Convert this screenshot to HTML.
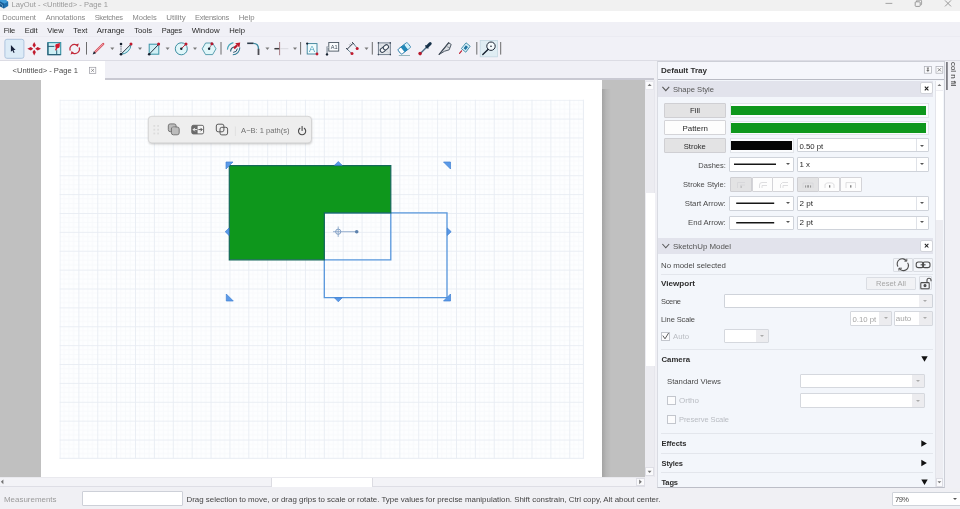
<!DOCTYPE html>
<html lang="en">
<head>
<meta charset="utf-8">
<title>LayOut - &lt;Untitled&gt; - Page 1</title>
<style>
*{box-sizing:border-box;margin:0;padding:0}
html,body{width:960px;height:509px;overflow:hidden;background:#f0f0f5}
body{font-family:"Liberation Sans",sans-serif;font-size:8px;color:#333;position:relative}
.a{position:absolute}
.t{position:absolute;white-space:nowrap;line-height:10px;height:10px;font-size:8px}
.b{font-weight:bold}
svg{position:absolute;overflow:visible}
/* bands */
#titlebar{left:0;top:0;width:960px;height:10.6px;background:#f1f1f1}
#menu1{left:0;top:10.6px;width:960px;height:11.6px;background:#fff}
#menu2{left:0;top:22.2px;width:960px;height:13.8px;background:#f0f0f6}
#toolbar{left:0;top:36px;width:960px;height:25px;background:#f1f1f7;border-top:1px solid #ebebf2;border-bottom:1px solid #dcdce4}
#tabbar{left:0;top:61px;width:654px;height:19px;background:#f0f0f6;border-bottom:2px solid #c9c9d2}
#tab{left:0;top:61px;width:105px;height:19px;background:#fff}
/* canvas */
#canvas{left:0;top:80px;width:645px;height:397px;background:#c0c0c0;overflow:hidden}
#page{left:41px;top:0;width:561px;height:397px;background:#fff}
#vscroll{left:645px;top:80px;width:10px;height:397px;background:#ececf1;border-right:1px solid #e6e6ec}
#hscroll{left:0;top:477px;width:645px;height:10px;background:#f3f3f7;border-top:1px solid #e9e9ee;border-bottom:1px solid #dedee5}
/* tray */
#tray{left:657px;top:61px;width:288px;height:427px;background:#f3f6fb;border:1px solid #cdcfd7;border-left-color:#d9dbe2;border-bottom-color:#bcbec7}
#trayhead{left:658px;top:62px;width:286px;height:18px;background:#f5f6fb;border-bottom:1px solid #b9bbc4}
.sechead{left:658px;width:275px;height:16px;background:#e2e3ec}
#status{left:0;top:488px;width:960px;height:21px;background:#f0f0f4}

.btn{position:absolute;border:1px solid #cfcfd3;background:#e3e3e4;border-radius:1px}
.btn.w{background:#fdfdfd;border-color:#d4d4d8}
.sw{position:absolute;background:#fbfcfe;border:1px solid #e2e5ea}
.sw i{position:absolute;display:block}
.cb{position:absolute;background:#fff;border:1px solid #cfd3da;border-radius:1px}
.cb u{position:absolute;top:0;bottom:0;width:1px;background:#dfe2e8}
.cb.dis{border-color:#d5d8de}
.cb.dis b{position:absolute;top:0;bottom:0;right:0;background:#ececef}
.ar{position:absolute;width:0;height:0;border-left:2.4px solid transparent;border-right:2.4px solid transparent;border-top:2.8px solid #555}
.ar.l{border-top-color:#aaa}
.ln{position:absolute;height:1.6px;background:#1a1a1a}
.sep{position:absolute;left:661px;width:272px;height:1px;background:#e3e6ec}
.chk{position:absolute;width:9px;height:9px;background:#fcfcfd;border:1px solid #c3c6cd}
.xbtn{position:absolute;width:13px;height:12px;background:#fff;border:1px solid #d2d4da;border-radius:2px}
.ibtn{position:absolute;background:#f4f6fa;border:1px solid #dadde3;border-radius:1px}
</style>
</head>
<body>
<div class="a" id="titlebar"></div>
<div class="a" id="menu1"></div>
<div class="a" id="menu2"></div>
<div class="a" id="toolbar"></div>
<div class="a" id="tabbar"></div>
<div class="a" id="tab"></div>


<!--ICONS-START-->
<svg id="tb" style="left:0;top:0;will-change:transform" width="960" height="509" viewBox="0 0 960 509" fill="none">
  <rect x="4.9" y="39.3" width="19" height="19" rx="2" fill="#dcebf7" stroke="#a7c0da" stroke-width="0.9"/>
  <path d="M10.9 45L10.9 51.8L12.5 50.4L13.6 52.9L14.6 52.4L13.5 50L15.6 50Z" fill="#18223c"/>
  <!-- move -->
  <g fill="#c01a2c">
    <path d="M34.2 41.9L35.9 45.3L34.2 47.7L32.5 45.3Z"/>
    <path d="M34.2 55.5L35.9 52.1L34.2 49.7L32.5 52.1Z"/>
    <path d="M27.4 48.7L30.8 47L33.2 48.7L30.8 50.4Z"/>
    <path d="M41 48.7L37.6 47L35.2 48.7L37.6 50.4Z"/>
  </g>
  <!-- scale -->
  <rect x="47.9" y="42.6" width="12.8" height="12" fill="#cdeff5" stroke="#3590a3" stroke-width="1.1"/>
  <path d="M47.9 42.6V54.6H60.7" stroke="#2a6078" stroke-width="1.2"/>
  <path d="M47.9 46.4H54.4M56.7 50.2V54.6" stroke="#2a6078" stroke-width="1"/>
  <path d="M56.8 44.2L60 42.7L59.4 46Z" fill="#d4182c"/>
  <path d="M55.9 49.8L57.2 46.8" stroke="#d4182c" stroke-width="1.5" stroke-linecap="round"/>
  <circle cx="57.5" cy="46" r="2.3" fill="#d4182c"/>
  <!-- rotate -->
  <g stroke="#c22a3a" stroke-width="1.15">
    <path d="M70.2 50.6A4.6 4.6 0 0 1 76.4 44.8"/><path d="M79.2 47.4A4.6 4.6 0 0 1 73 53.2"/>
  </g>
  <path d="M78.8 43.6L77.8 47L75 44.8Z M70.6 54.4L71.6 51L74.4 53.2Z" fill="#c22a3a"/>
  <!-- pencil -->
  <path d="M95.4 51.8L103.2 44" stroke="#d64a57" stroke-width="2.3" stroke-linecap="round"/>
  <path d="M95.4 51.8L103.2 44" stroke="#f6c9cd" stroke-width="0.8"/>
  <path d="M92.7 54.5L93.9 51.2L96 53.3Z" fill="#15202e"/>
  <!-- arc -->
  <path d="M121 54.2L131 44.4A10 10 0 0 1 121 54.2Z" fill="#d3f2f6"/>
  <path d="M121 54.2A10 10 0 0 0 131 44.6" stroke="#3a93a6" stroke-width="1"/>
  <path d="M121 54.2L130.6 44.6" stroke="#15202e" stroke-width="0.9"/>
  <path d="M121 44V54" stroke="#15202e" stroke-width="0.8" stroke-dasharray="1.2 1"/>
  <circle cx="121" cy="44" r="1.3" fill="#15202e"/><circle cx="121" cy="54.3" r="1.3" fill="#15202e"/><circle cx="131" cy="44" r="1.5" fill="#c01a2e"/>
  <!-- rectangle -->
  <rect x="149.2" y="44.2" width="9.6" height="10" fill="#cfeff5" stroke="#3a93a6" stroke-width="1"/>
  <path d="M149.2 54.2L158.6 44.4" stroke="#15202e" stroke-width="0.9"/>
  <circle cx="149.2" cy="54.3" r="1.3" fill="#15202e"/><circle cx="158.6" cy="44" r="1.5" fill="#c01a2e"/>
  <!-- circle -->
  <circle cx="181.3" cy="48.8" r="6" fill="#e0f6f9" stroke="#2d8498" stroke-width="0.9"/>
  <path d="M181.3 48.8L185.8 44.2" stroke="#c01a2e" stroke-width="0.9"/>
  <circle cx="181.3" cy="48.8" r="1.2" fill="#15202e"/><circle cx="186" cy="44" r="1.5" fill="#c01a2e"/>
  <!-- polygon -->
  <path d="M202.2 48.8L205.6 43H212.6L216 48.8L212.6 54.6H205.6Z" fill="#e0f6f9" stroke="#36889c" stroke-width="0.8"/>
  <path d="M209.1 48.8L211.9 43.9" stroke="#6a3a48" stroke-width="0.6"/>
  <circle cx="209.1" cy="48.8" r="1.2" fill="#15202e"/><circle cx="211.9" cy="43.8" r="1.5" fill="#b8152e"/>
  <!-- offset -->
  <path d="M227.4 49.6A8 8 0 0 1 233.4 42.6" stroke="#46a6b9" stroke-width="1.1"/>
  <path d="M230.6 51.6A5 5 0 0 1 234.6 46.8" stroke="#2a5a70" stroke-width="1.1"/>
  <path d="M232.8 54.8A7 7 0 0 0 239.8 47.6" stroke="#2f7c95" stroke-width="1.1"/>
  <path d="M233.2 52.4A4.4 4.4 0 0 0 237.4 48.6" stroke="#2a5a70" stroke-width="1"/>
  <path d="M234 48.4L237.2 45.2" stroke="#bd1a2e" stroke-width="2.2"/>
  <path d="M240.2 42.4L239.4 47.4L235.2 43.2Z" fill="#bd1a2e"/>
  <!-- fillet -->
  <path d="M253.2 43.3Q258.5 43.3 258.5 49" stroke="#3a8aa0" stroke-width="1.3"/>
  <path d="M258.5 48.8V55" stroke="#4c4c52" stroke-width="1.8"/>
  <path d="M247.2 43.3H253.4" stroke="#2c3a48" stroke-width="1.6"/>
  <!-- split -->
  <path d="M274.4 48.7H279.4" stroke="#3a3a3a" stroke-width="1.5"/>
  <path d="M279.6 42V55.2" stroke="#8a4f58" stroke-width="0.7"/>
  <path d="M280 48.7H288.4" stroke="#d7d7dd" stroke-width="0.9"/>
  <!-- text -->
  <rect x="307.2" y="43.6" width="9.8" height="10.4" fill="#f0fbfd" stroke="#3a8299" stroke-width="0.9"/>
  <circle cx="307.2" cy="43.6" r="1.1" fill="#15202e"/><circle cx="317" cy="54" r="1.4" fill="#c01a2e"/>
  <!-- label -->
  <rect x="328.8" y="42.5" width="9.9" height="8.6" fill="#fafcfd" stroke="#4a5662" stroke-width="0.9"/>
  <path d="M328.8 47.4H327.2V54" stroke="#7d8893" stroke-width="1.6"/><path d="M328.8 47.4H327.2V54" stroke="#f3f5f7" stroke-width="0.5"/>
  <circle cx="327" cy="54.4" r="1.2" fill="#15202e"/>
  <!-- dimension -->
  <path d="M347.2 49.2L353.2 43.2" stroke="#15202e" stroke-width="0.9"/>
  <path d="M346 48L348.4 50.4M352 42L354.4 44.4" stroke="#15202e" stroke-width="0.8"/>
  <path d="M347.6 49.6L351.6 53.4M353.4 43.6L357 47.8" stroke="#4a6a7a" stroke-width="0.8"/>
  <path d="M349.4 44.6L350.2 45.6M350.6 43.6L351.4 44.6" stroke="#15202e" stroke-width="0.5"/>
  <circle cx="352" cy="53.6" r="1.5" fill="#c01a2e"/><circle cx="357.2" cy="48.6" r="1.5" fill="#c01a2e"/>
  <!-- frame -->
  <rect x="378.4" y="42.9" width="11.9" height="11.7" fill="#e4e7eb" stroke="#6a7786" stroke-width="0.9"/>
  <path d="M378.4 42.9L390.3 54.6" stroke="#c3cad2" stroke-width="0.6"/>
  <g fill="#3a4656"><circle cx="378.4" cy="42.9" r="0.8"/><circle cx="390.3" cy="42.9" r="0.8"/><circle cx="378.4" cy="54.6" r="0.8"/><circle cx="390.3" cy="54.6" r="0.8"/></g>
  <g transform="rotate(-40 384.4 48.6)" fill="#f7f8fa" stroke="#3a4758" stroke-width="1">
    <rect x="379.6" y="46.5" width="5.6" height="4.2" rx="2.1"/>
    <rect x="383.6" y="46.5" width="5.6" height="4.2" rx="2.1"/>
  </g>
  <!-- eraser -->
  <g transform="rotate(-38 404.2 48.4)">
    <rect x="398.2" y="45.3" width="12" height="6.2" rx="1.4" fill="#fff" stroke="#1f78a8" stroke-width="0.9"/>
    <rect x="402.2" y="45.3" width="4.4" height="6.2" fill="#2287b8"/>
    <rect x="406.6" y="45.75" width="3.15" height="5.3" rx="0.9" fill="#d3f1fa"/>
  </g>
  <path d="M398.8 55.5H410" stroke="#7fa7ad" stroke-width="0.8"/>
  <!-- eyedropper -->
  <path d="M420.8 53L427.6 46.2" stroke="#4f6f88" stroke-width="1.4"/>
  <path d="M427 46.8L430.2 43.6" stroke="#17324a" stroke-width="3" stroke-linecap="round"/>
  <path d="M425.4 45.4L428.4 48.4" stroke="#17324a" stroke-width="1.1"/>
  <circle cx="420.1" cy="53.6" r="1.8" fill="#b8182c"/>
  <!-- knife -->
  <path d="M439.2 54.4L448.6 42.8L451.2 44.4L449.2 49.8L444.6 51.2Z" fill="#dde0e5" stroke="#4d5864" stroke-width="1" stroke-linejoin="round"/>
  <path d="M439.2 54.4L448.6 42.8" stroke="#46505c" stroke-width="1.3" stroke-linecap="round"/>
  <path d="M447.2 46.8L449.8 47.8" stroke="#5a6470" stroke-width="0.7"/>
  <!-- paint tag -->
  <path d="M461.4 48.6L466 42.8L470.2 46.2L465.8 52.2Z" fill="#d9f0f8" stroke="#3a88a6" stroke-width="0.9" stroke-linejoin="round"/>
  <path d="M463.6 48.2L465.9 45.3L468 47L465.7 50Z" fill="#1f73a0"/>
  <path d="M461.6 50.8L459.5 53.4" stroke="#c01c30" stroke-width="1.1" stroke-linecap="round"/>
  <!-- zoom -->
  <rect x="480.2" y="40.4" width="17.2" height="16.4" fill="#dfedf3" stroke="#c2d7e1" stroke-width="0.8"/>
  <circle cx="491" cy="46.2" r="4.2" fill="#f4fafc" stroke="#1b2634" stroke-width="1"/>
  <circle cx="491" cy="46.2" r="0.8" fill="#15202e"/>
  <path d="M488 49.4L482.8 54.4" stroke="#15202e" stroke-width="1.4" stroke-linecap="round"/>
  <path d="M110.3 47.6H114.3L112.3 49.9Z" fill="#7a7a7a"/><path d="M138.0 47.6H142.0L140.0 49.9Z" fill="#7a7a7a"/><path d="M165.6 47.6H169.6L167.6 49.9Z" fill="#7a7a7a"/><path d="M193.0 47.6H197.0L195.0 49.9Z" fill="#7a7a7a"/><path d="M265.4 47.6H269.4L267.4 49.9Z" fill="#7a7a7a"/><path d="M293.0 47.6H297.0L295.0 49.9Z" fill="#7a7a7a"/><path d="M364.5 47.6H368.5L366.5 49.9Z" fill="#7a7a7a"/><path d="M86.5 42V54.6" stroke="#5c5c5c" stroke-width="0.9"/><path d="M221.0 42V54.6" stroke="#5c5c5c" stroke-width="0.9"/><path d="M300.6 42V54.6" stroke="#5c5c5c" stroke-width="0.9"/><path d="M372.3 42V54.6" stroke="#5c5c5c" stroke-width="0.9"/><path d="M476.8 42V54.6" stroke="#5c5c5c" stroke-width="0.9"/><path d="M500.7 42V54.6" stroke="#5c5c5c" stroke-width="0.9"/>
  <text x="309.1" y="52.4" font-family="Liberation Sans, sans-serif" font-size="9" fill="#4a9fba">A</text>
  <text x="330.7" y="49.4" font-family="Liberation Sans, sans-serif" font-size="5.6" fill="#3d4a58">A1</text>
</svg>
<!--ICONS-END-->
<div class="a" id="canvas">
  <div class="a" id="page"></div>
</div>

<svg id="cv" class="a" style="left:0;top:0" width="960" height="509" viewBox="0 0 960 509">
  <defs>
    <pattern id="grid" x="59.5" y="99.7" width="18.88" height="18.88" patternUnits="userSpaceOnUse">
      <rect width="18.88" height="18.88" fill="#fdfeff"/>
      <path d="M4.72 0V18.88M9.44 0V18.88M14.16 0V18.88M0 4.72H18.88M0 9.44H18.88M0 14.16H18.88" stroke="#f6f8fb" stroke-width="0.7" fill="none"/>
      <path d="M0.5 0V18.88M0 0.5H18.88" stroke="#e8ecf3" stroke-width="0.9" fill="none"/>
    </pattern>
    <linearGradient id="pshadow" x1="0" x2="1" y1="0" y2="0">
      <stop offset="0" stop-color="#a3a3a3"/><stop offset="0.45" stop-color="#b6b6b6"/><stop offset="1" stop-color="#c0c0c0"/>
    </linearGradient>
    <filter id="ftb" x="-10%" y="-30%" width="120%" height="170%"><feGaussianBlur stdDeviation="1.2"/></filter>
  </defs>
  <!-- page shadow -->
  <rect x="602" y="89" width="9" height="388" fill="url(#pshadow)"/>
  <!-- grid -->
  <rect x="59.5" y="99.7" width="524" height="358.9" fill="url(#grid)"/>
  <path d="M583.5 99.7V458.6M59.5 458.3H583.8" stroke="#e8ecf3" stroke-width="0.9" fill="none"/>
  <!-- blue outlines -->
  <path d="M324.3 212.9H447V297.6H324.3Z" fill="none" stroke="#5796dc" stroke-width="1.3"/>
  <path d="M390.8 212.9V259.9H324.3" fill="none" stroke="#5796dc" stroke-width="1.3"/>
  <!-- green shape (A minus B) -->
  <path d="M229.3 165.6H390.8V212.8H324.3V259.8H229.3Z" fill="#0e971c" stroke="#14685a" stroke-width="1.2" stroke-linejoin="miter"/>
  <!-- handles -->
  <g fill="#5b9ae8" stroke="#3f80d2" stroke-width="0.7">
    <path d="M226 162H233L226 169Z"/>
    <path d="M443.5 162H450.5V169Z"/>
    <path d="M226.3 294V301H233.3Z"/>
    <path d="M450.5 294V301H443.5Z"/>
    <path d="M334.5 165.3L338.3 161.5L342.1 165.3Z"/>
    <path d="M334.5 297.8L338.3 301.8L342.1 297.8Z"/>
    <path d="M229 228L225.2 231.7L229 235.4Z"/>
    <path d="M447.3 228L451.2 231.7L447.3 235.4Z"/>
  </g>
  <!-- center grip -->
  <g fill="none" stroke="#7f9dc4" stroke-width="0.8">
    <circle cx="338.2" cy="231.7" r="2.6" stroke="#6589b6"/>
    <path d="M338.2 226.5V236.9M333 231.7H355"/>
    <circle cx="356.7" cy="231.7" r="1.8" fill="#5d82ad" stroke="none"/>
  </g>
  <!-- floating toolbar -->
  <rect x="148.8" y="117.3" width="163" height="27" rx="3.5" fill="#9a9a9a" opacity="0.55" filter="url(#ftb)"/>
  <rect x="148.3" y="116.3" width="163.2" height="26.6" rx="3.5" fill="#eeeeee" stroke="#cfcfcf" stroke-width="0.8"/>
  <g fill="#dcdcdc">
    <rect x="153.4" y="125" width="1.8" height="1.8"/><rect x="157.2" y="125" width="1.8" height="1.8"/>
    <rect x="153.4" y="128.8" width="1.8" height="1.8"/><rect x="157.2" y="128.8" width="1.8" height="1.8"/>
    <rect x="153.4" y="132.6" width="1.8" height="1.8"/><rect x="157.2" y="132.6" width="1.8" height="1.8"/>
  </g>
  <!-- union icon -->
  <rect x="168.3" y="123.9" width="7.8" height="7.8" rx="2" fill="#bcbcbc" stroke="#6c6c6c" stroke-width="0.9"/>
  <rect x="171.4" y="127" width="7.8" height="7.8" rx="2" fill="#bcbcbc" stroke="#6c6c6c" stroke-width="0.9"/>
  <path d="M172 127.5H175.5V131H172Z" fill="#bcbcbc"/>
  <!-- split icon -->
  <rect x="191.8" y="125.3" width="11.8" height="8.6" rx="1.5" fill="#f4f4f4" stroke="#5a5a5a" stroke-width="0.9"/>
  <path d="M193.3 125.3H197.6V133.9H193.3Q191.8 133.9 191.8 132.4V126.8Q191.8 125.3 193.3 125.3Z" fill="#6a6a6a"/>
  <path d="M197 129.6H193.2M194.9 127.9L193.2 129.6L194.9 131.3" stroke="#fff" stroke-width="0.9" fill="none"/>
  <path d="M198.4 129.6H202.2M200.5 127.9L202.2 129.6L200.5 131.3" stroke="#4a4a4a" stroke-width="0.9" fill="none"/>
  <!-- intersect icon -->
  <rect x="216.3" y="124.2" width="7.6" height="7.6" rx="1.8" fill="none" stroke="#5c5c5c" stroke-width="1"/>
  <rect x="220" y="127.3" width="7.6" height="7.6" rx="1.8" fill="none" stroke="#5c5c5c" stroke-width="1"/>
  <path d="M235.4 126.5V136" stroke="#dddddd" stroke-width="0.8"/>
  <!-- power icon -->
  <path d="M299.9 128.3A3.6 3.6 0 1 0 304.3 128.3" fill="none" stroke="#4a4a4a" stroke-width="1.1" stroke-linecap="round"/>
  <path d="M302.1 126.6V130.4" stroke="#4a4a4a" stroke-width="1.1" stroke-linecap="round"/>
</svg>
<div class="a" id="vscroll"></div>
<div class="a" id="hscroll"></div>

<div class="a" id="tray"></div>
<div class="a" id="trayhead"></div>
<div class="a sechead" style="top:81px"></div>
<div class="a sechead" style="top:238px"></div>


<!--TRAY-START-->
<div class="btn" style="left:664px;top:103px;width:62.2px;height:14.5px"></div>
<div class="sw" style="left:729.5px;top:103px;width:199px;height:14.5px"><i style="left:0.6px;top:1.7px;width:195px;height:9.4px;background:#0e971c"></i></div>
<div class="btn w" style="left:664px;top:120.4px;width:62.2px;height:14.7px"></div>
<div class="sw" style="left:729.5px;top:120.8px;width:199px;height:14.5px"><i style="left:0.6px;top:1.6px;width:195px;height:9.6px;background:#0e971c"></i></div>
<div class="btn" style="left:664px;top:138.3px;width:62.2px;height:14.4px"></div>
<div class="sw" style="left:729.5px;top:138.3px;width:64px;height:14.4px"><i style="left:0.6px;top:1.7px;width:60.8px;height:9.3px;background:#050505"></i></div>
<div class="cb" style="left:797px;top:138.3px;width:131.5px;height:14.2px"><u style="left:118px"></u></div><div class="ar" style="left:920px;top:144.5px"></div>

<div class="cb" style="left:729px;top:156.7px;width:65px;height:15px"></div><div class="ar" style="left:785.8px;top:162.8px"></div>
<div class="cb" style="left:797px;top:156.7px;width:131.5px;height:15px"><u style="left:118px"></u></div><div class="ar" style="left:920px;top:162.8px"></div>

<div class="btn" style="left:730px;top:176.6px;width:22px;height:15.2px"></div>
<div class="btn w" style="left:751.5px;top:176.6px;width:21.5px;height:15.2px"></div>
<div class="btn w" style="left:772.4px;top:176.6px;width:21.5px;height:15.2px"></div>
<div class="btn" style="left:797.3px;top:176.6px;width:21.5px;height:15.2px"></div>
<div class="btn w" style="left:818.3px;top:176.6px;width:21.7px;height:15.2px"></div>
<div class="btn w" style="left:839.5px;top:176.6px;width:22px;height:15.2px"></div>
<svg style="left:0;top:0" width="960" height="509" viewBox="0 0 960 509" fill="none">
  <g stroke="#d6d6d8" stroke-width="0.8">
    <path d="M737.5 188V182.5H745M740.5 188V185H745"/>
    <path d="M759.5 188V185Q759.5 182.5 762 182.5H767M762 188V185.5H767"/>
    <path d="M780.5 188V184.5L782.5 182.5H788M783 188V185.5H788"/>
    <path d="M803 183H813V188M803 188V183"/>
    <path d="M825 188V185Q825 182.8 829.5 182.8Q834 182.8 834 185V188"/>
    <path d="M846 188V182.6H855.5V188"/>
  </g>
  <g fill="#7c7c7c"><rect x="807.4" y="185.2" width="1.3" height="2.4"/><rect x="829" y="185.2" width="1.3" height="2.4"/><rect x="850.1" y="185.2" width="1.3" height="2.4"/></g>
  <g fill="#9a9a9a"><rect x="805" y="185.4" width="1.1" height="2.2"/><rect x="810" y="185.4" width="1.1" height="2.2"/></g><rect x="740.6" y="185.8" width="1.4" height="2.2" fill="#c4c4c4"/>
</svg>

<div class="cb" style="left:729px;top:196px;width:65px;height:14.5px"></div><div class="ar" style="left:785.8px;top:201.8px"></div>
<div class="cb" style="left:797px;top:196px;width:131.5px;height:14.5px"><u style="left:118px"></u></div><div class="ar" style="left:920px;top:201.8px"></div>
<div class="cb" style="left:729px;top:215.6px;width:65px;height:14.2px"></div><div class="ar" style="left:785.8px;top:221.2px"></div>
<div class="cb" style="left:797px;top:215.6px;width:131.5px;height:14.2px"><u style="left:118px"></u></div><div class="ar" style="left:920px;top:221.2px"></div>

<div class="xbtn" style="left:920px;top:82.3px"></div>
<div class="xbtn" style="left:920px;top:239.6px"></div>
<div class="ibtn" style="left:893.3px;top:257.5px;width:19.6px;height:14.4px"></div>
<div class="ibtn" style="left:913.2px;top:257.5px;width:19.6px;height:14.4px"></div>
<div class="sep" style="top:273.5px"></div>
<div class="ibtn" style="left:866.3px;top:276.6px;width:49.6px;height:13.6px;background:#f1f2f5"></div>
<div class="ibtn" style="left:918.5px;top:276.2px;width:13.6px;height:14.2px"></div>

<div class="cb" style="left:724px;top:293.7px;width:208.7px;height:14.5px"><u style="left:194px"></u><b style="position:absolute;top:0;bottom:0;right:0;width:12.5px;background:#efeff2"></b></div><div class="ar l" style="left:923.4px;top:299.8px"></div>
<div class="cb dis" style="left:850px;top:311.3px;width:42.4px;height:14.6px"><b style="width:12px"></b></div><div class="ar l" style="left:883.6px;top:317.4px"></div>
<div class="cb dis" style="left:893.7px;top:311.3px;width:39px;height:14.6px"><b style="width:13px"></b></div><div class="ar l" style="left:923.4px;top:317.4px"></div>
<div class="chk" style="left:661px;top:331.6px"></div>
<div class="cb dis" style="left:724px;top:328.7px;width:45.2px;height:14.8px"><b style="width:12.5px"></b></div><div class="ar l" style="left:759.6px;top:335px"></div>
<div class="sep" style="top:348.6px"></div>
<div class="cb dis" style="left:800px;top:373.6px;width:125.3px;height:14.8px"><b style="width:12.5px"></b></div><div class="ar l" style="left:915.8px;top:380px"></div>
<div class="chk" style="left:667px;top:395.8px"></div>
<div class="cb dis" style="left:800px;top:393.3px;width:125.3px;height:14.8px"><b style="width:12.5px"></b></div><div class="ar l" style="left:915.8px;top:399.7px"></div>
<div class="chk" style="left:667px;top:414.8px"></div>
<div class="sep" style="top:433.2px"></div>
<div class="sep" style="top:453.3px"></div>
<div class="sep" style="top:472.4px"></div>
<svg style="left:0;top:0" width="960" height="509" viewBox="0 0 960 509">
  <!-- section chevrons -->
  <path d="M662.4 86.9L665.8 90.7L669.2 86.9M662.4 244L665.8 247.8L669.2 244" fill="none" stroke="#5a5a5a" stroke-width="1.1"/>
  <!-- x in close buttons -->
  <path d="M924.8 86.7L928.4 90.3M928.4 86.7L924.8 90.3M924.8 243.9L928.4 247.5M928.4 243.9L924.8 247.5" stroke="#1e1e1e" stroke-width="1.05"/>
  <!-- disclosure triangles -->
  <path d="M921.3 356.2H927.7L924.5 361.8Z" fill="#111"/>
  <path d="M921.3 440.2V446.8L926.9 443.5Z" fill="#111"/>
  <path d="M921.3 459.7V466.3L926.9 463Z" fill="#111"/>
  <path d="M921.3 479.5H927.7L924.5 485.1Z" fill="#111"/>
  <!-- auto check -->
  <path d="M662.8 335.6L665 338.8L668.6 333" fill="none" stroke="#5a5a5a" stroke-width="1"/>
  <!-- refresh icon -->
  <g fill="none" stroke="#4e4e4e" stroke-width="1.1">
    <path d="M898 266.6A4.9 4.9 0 0 1 906.4 261"/><path d="M907.6 262.8A4.9 4.9 0 0 1 899.2 268.4"/>
    <path d="M904.4 261.2H906.8V258.8M902 268.2H898.9V270.6" stroke-width="0.9"/>
    <!-- link icon -->
    <rect x="916.2" y="262" width="7.4" height="5.6" rx="2.2"/><rect x="922.6" y="262" width="7.4" height="5.6" rx="2.2"/>
    <path d="M920.6 264.8H925.6" />
    <!-- lock icon -->
    <rect x="920.8" y="282.6" width="8.4" height="6.2" rx="0.8"/><path d="M927 282.6V280.2A2 2 0 0 1 931 280.2V281.2"/>
    <circle cx="925" cy="285.6" r="1" fill="#4e4e4e"/>
  </g>
  <path d="M734 164.2H776M736.2 203.3H774.2M736.2 222.7H774.2" stroke="#161616" stroke-width="1.5"/>
</svg>
<!--TRAY-END-->

<!--MISC-START-->
<div class="a" style="left:645.5px;top:193px;width:9px;height:173px;background:#fff"></div>
<div class="a" style="left:645px;top:81px;width:9px;height:9px;background:#fafafc;border:1px solid #e6e6ec"></div>
<div class="a" style="left:645px;top:467px;width:9px;height:9px;background:#fafafc;border:1px solid #dedee5"></div>
<div class="a" style="left:271px;top:477.5px;width:101.5px;height:9px;background:#fff;border-left:1px solid #dcdce2;border-right:1px solid #dcdce2"></div>
<div class="a" style="left:635.5px;top:477.5px;width:9px;height:8px;background:#fafafc;border:1px solid #dedee5"></div>
<div class="a" style="left:934.5px;top:80.5px;width:8.5px;height:406.5px;background:#ededf2;border-left:1px solid #e4e5eb"></div>
<div class="a" style="left:935.5px;top:90.5px;width:7.5px;height:129.5px;background:#fff"></div>
<div class="a" style="left:935.5px;top:81px;width:7.5px;height:9px;background:#fbfbfd"></div>
<div class="a" style="left:935.5px;top:477.5px;width:7.5px;height:9.5px;background:#fbfbfd;border:1px solid #dcdce3"></div>
<div class="t" style="left:950px;top:62.3px;font-size:7.9px;color:#2f2f2f;transform-origin:0 0;transform:rotate(90deg) translate(0,-8.2px)">col n fil</div>
<svg style="left:0;top:0" width="960" height="509" viewBox="0 0 960 509" fill="none">
  <!-- app logo -->
  <path d="M0 0H5.6L8.2 1.8V6L4 8.6L0 6.2Z" fill="#1f6fae"/>
  <path d="M0 1.6L4 3.8L8.2 1.8L5.6 0H0Z" fill="#3f9bd8"/>
  <path d="M4 3.8V8.6L0 6.2V1.6Z" fill="#185a92"/>
  <path d="M0 3.4L2.6 5V7.6" stroke="#9cd0f0" stroke-width="0.5"/>
  <!-- window controls -->
  <path d="M885.5 3.4H892.3" stroke="#9b9b9b" stroke-width="0.9"/>
  <rect x="915.2" y="1.8" width="5" height="4.6" rx="0.8" stroke="#8e8e8e" stroke-width="0.9"/>
  <path d="M916.6 1.8V0.8Q916.6 0.2 917.4 0.2H920.8Q921.6 0.2 921.6 1V4.2Q921.6 5 920.6 5" stroke="#8e8e8e" stroke-width="0.8"/>
  <path d="M945 0.4L951 6.4M951 0.4L945 6.4" stroke="#8e8e8e" stroke-width="0.9"/>
  <!-- tab close -->
  <rect x="89.4" y="67.3" width="6.4" height="6.2" stroke="#9a9aa2" stroke-width="0.7" fill="#fcfcfd"/>
  <path d="M91.2 69L94 71.8M94 69L91.2 71.8" stroke="#777" stroke-width="0.7"/>
  <!-- tray pin / close -->
  <rect x="924.3" y="66.4" width="7.2" height="6.8" stroke="#a9abb3" stroke-width="0.7" fill="#fbfbfd"/>
  <path d="M926.8 68H929M927.9 68V71.8M926.6 70.4H929.2" stroke="#555" stroke-width="0.8"/>
  <rect x="936" y="66.4" width="6.8" height="6.8" stroke="#a9abb3" stroke-width="0.7" fill="#fbfbfd"/>
  <path d="M937.8 68.2L941 71.4M941 68.2L937.8 71.4" stroke="#666" stroke-width="0.8"/>
  <!-- side bar marker -->
  <rect x="946" y="62" width="1.8" height="28" fill="#7d7d84"/>
  <!-- scroll arrows -->
  <g fill="#747474">
    <path d="M647.6 86L649.6 83.8L651.6 86Z"/>
    <path d="M647.6 470.8L649.6 473L651.6 470.8Z"/>
    <path d="M937.5 86L939.4 83.9L941.3 86Z"/>
    <path d="M937.5 481.2L939.4 483.3L941.3 481.2Z"/>
    <path d="M3.4 479.4L0.8 481.8L3.4 484.2Z"/>
    <path d="M639.2 479.4L641.8 481.8L639.2 484.2Z"/>
  </g>
</svg>
<!--MISC-END-->
<div class="a" id="status"></div>
<div class="a" style="left:82.3px;top:491.3px;width:101px;height:15px;background:#fff;border:1px solid #cdd0d8;border-radius:1px"></div>
<div class="cb" style="left:891.7px;top:491.5px;width:70px;height:14.3px"></div><div class="ar" style="left:953.2px;top:497.6px"></div>

<div id="txt" style="position:absolute;left:0;top:0;width:960px;height:509px;will-change:transform"><!--TEXT-START-->
<div class="t" style="left:11.5px;top:-0.4px;font-size:7.58px;color:#9a9a9a;">LayOut - &lt;Untitled&gt; - Page 1</div>
<div class="t" style="left:2.3px;top:13.1px;font-size:7.50px;color:#868686;letter-spacing:-0.097px;">Document</div>
<div class="t" style="left:45.8px;top:13.1px;font-size:7.50px;color:#868686;letter-spacing:-0.011px;">Annotations</div>
<div class="t" style="left:94.7px;top:13.1px;font-size:7.50px;color:#868686;letter-spacing:-0.364px;">Sketches</div>
<div class="t" style="left:132.5px;top:13.1px;font-size:7.51px;color:#868686;">Models</div>
<div class="t" style="left:166.3px;top:12.9px;font-size:7.98px;color:#868686;">Utility</div>
<div class="t" style="left:195.0px;top:13.1px;font-size:7.50px;color:#868686;letter-spacing:-0.276px;">Extensions</div>
<div class="t" style="left:238.7px;top:13.0px;font-size:7.78px;color:#868686;">Help</div>
<div class="t" style="left:3.7px;top:25.6px;font-size:7.50px;color:#2a2a2a;letter-spacing:-0.162px;">File</div>
<div class="t" style="left:24.7px;top:25.6px;font-size:7.50px;color:#2a2a2a;letter-spacing:-0.042px;">Edit</div>
<div class="t" style="left:47.2px;top:25.5px;font-size:7.68px;color:#2a2a2a;">View</div>
<div class="t" style="left:73.3px;top:25.5px;font-size:7.74px;color:#2a2a2a;">Text</div>
<div class="t" style="left:96.7px;top:25.5px;font-size:7.87px;color:#2a2a2a;">Arrange</div>
<div class="t" style="left:134.2px;top:25.6px;font-size:7.62px;color:#2a2a2a;">Tools</div>
<div class="t" style="left:161.7px;top:25.6px;font-size:7.50px;color:#2a2a2a;letter-spacing:-0.242px;">Pages</div>
<div class="t" style="left:191.7px;top:25.5px;font-size:7.87px;color:#2a2a2a;">Window</div>
<div class="t" style="left:229.2px;top:25.5px;font-size:7.68px;color:#2a2a2a;">Help</div>
<div class="t" style="left:12.5px;top:65.9px;font-size:7.60px;color:#4a4a4a;">&lt;Untitled&gt; - Page 1</div>
<div class="t" style="left:241.1px;top:126.2px;font-size:7.55px;color:#707070;">A−B: 1 path(s)</div>
<div class="t b" style="left:661.0px;top:65.6px;font-size:8.04px;color:#2e2e2e;">Default Tray</div>
<div class="t" style="left:673.0px;top:85.1px;font-size:7.60px;color:#555;">Shape Style</div>
<div class="t" style="left:690.0px;top:105.5px;font-size:7.83px;color:#2a2a2a;">Fill</div>
<div class="t" style="left:682.5px;top:123.7px;font-size:7.91px;color:#2a2a2a;">Pattern</div>
<div class="t" style="left:683.7px;top:141.8px;font-size:7.65px;color:#2a2a2a;">Stroke</div>
<div class="t" style="left:698.3px;top:160.6px;font-size:7.50px;color:#4a4a4a;">Dashes:</div>
<div class="t" style="left:683.0px;top:179.6px;font-size:7.55px;color:#4a4a4a;">Stroke Style:</div>
<div class="t" style="left:684.7px;top:198.8px;font-size:7.87px;color:#4a4a4a;">Start Arrow:</div>
<div class="t" style="left:688.0px;top:218.3px;font-size:7.73px;color:#4a4a4a;">End Arrow:</div>
<div class="t" style="left:799.5px;top:141.5px;font-size:7.78px;color:#2a2a2a;">0.50 pt</div>
<div class="t" style="left:799.5px;top:160.2px;font-size:7.87px;color:#2a2a2a;">1 x</div>
<div class="t" style="left:799.5px;top:198.6px;font-size:8.09px;color:#2a2a2a;">2 pt</div>
<div class="t" style="left:799.5px;top:218.0px;font-size:8.09px;color:#2a2a2a;">2 pt</div>
<div class="t" style="left:673.0px;top:241.5px;font-size:7.91px;color:#555;">SketchUp Model</div>
<div class="t" style="left:661.0px;top:261.0px;font-size:7.85px;color:#4a4a4a;">No model selected</div>
<div class="t b" style="left:661.0px;top:279.1px;font-size:8.09px;color:#2e2e2e;">Viewport</div>
<div class="t" style="left:876.0px;top:279.1px;font-size:7.60px;color:#a6a6a6;">Reset All</div>
<div class="t" style="left:661.0px;top:296.9px;font-size:7.50px;color:#4a4a4a;letter-spacing:-0.317px;">Scene</div>
<div class="t" style="left:661.0px;top:314.6px;font-size:7.50px;color:#4a4a4a;letter-spacing:-0.114px;">Line Scale</div>
<div class="t" style="left:852.5px;top:314.5px;font-size:7.78px;color:#a6a6a6;">0.10 pt</div>
<div class="t" style="left:895.8px;top:314.4px;font-size:7.96px;color:#a6a6a6;">auto</div>
<div class="t" style="left:673.0px;top:332.0px;font-size:7.78px;color:#b9bcc2;">Auto</div>
<div class="t b" style="left:661.5px;top:354.5px;font-size:7.77px;color:#2e2e2e;">Camera</div>
<div class="t" style="left:667.0px;top:376.8px;font-size:7.73px;color:#4a4a4a;">Standard Views</div>
<div class="t" style="left:679.0px;top:395.9px;font-size:8.00px;color:#b9bcc2;">Ortho</div>
<div class="t" style="left:679.0px;top:415.1px;font-size:7.50px;color:#b9bcc2;letter-spacing:-0.066px;">Preserve Scale</div>
<div class="t b" style="left:661.5px;top:439.1px;font-size:7.50px;color:#2e2e2e;">Effects</div>
<div class="t b" style="left:661.5px;top:458.6px;font-size:7.50px;color:#2e2e2e;letter-spacing:-0.120px;">Styles</div>
<div class="t b" style="left:661.5px;top:478.1px;font-size:7.50px;color:#2e2e2e;letter-spacing:-0.150px;">Tags</div>
<div class="t" style="left:895.0px;top:494.6px;font-size:7.50px;color:#4a4a4a;letter-spacing:-0.506px;">79%</div>
<div class="t" style="left:4.0px;top:494.8px;font-size:7.94px;color:#9a9a9a;">Measurements</div>
<div class="t" style="left:186.5px;top:495.1px;font-size:7.92px;color:#454545;">Drag selection to move, or drag grips to scale or rotate. Type values for precise manipulation. Shift constrain, Ctrl copy, Alt about center.</div>
<!--TEXT-END--></div>
</body>
</html>
